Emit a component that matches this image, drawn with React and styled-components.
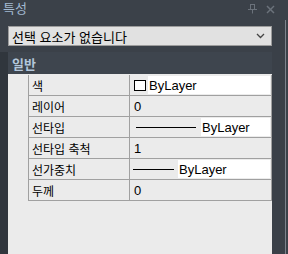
import React from "react";
import styled, { createGlobalStyle } from "styled-components";

const GlobalStyle = createGlobalStyle`
  html, body {
    margin: 0;
    padding: 0;
    background: #3b4149;
    overflow: hidden;
  }
  body {
    font-family: "Liberation Sans", "Noto Sans CJK KR", sans-serif;
  }
`;

const Panel = styled.div`
  width: 288px;
  height: 254px;
  display: flex;
  flex-direction: column;
  background: #3b4149;
`;

const TitleBar = styled.div`
  height: 20px;
  display: flex;
  align-items: center;
  justify-content: space-between;
  padding: 0 13px 0 3px;
`;

const Title = styled.span`
  color: #a3bad2;
  font-size: 13px;
  line-height: 20px;
  margin-top: -2px;
`;

const TitleIcons = styled.div`
  display: flex;
  align-items: center;
  gap: 9px;
  color: #6b727b;
  margin-top: -2px;
`;

const Body = styled.div`
  flex: 1;
  display: flex;
  min-height: 0;
`;

const Main = styled.div`
  width: 272px;
  display: flex;
  flex-direction: column;
`;

const RightEdge = styled.div`
  width: 13px;
  border-right: 1px solid #7c838c;
  background: #3a4048;
`;

const RightPad = styled.div`
  width: 2px;
  background: #3b4149;
`;

const DropdownArea = styled.div`
  height: 32px;
  padding: 6px 0 0 8px;
  box-sizing: border-box;
`;

const Dropdown = styled.div`
  width: 264px;
  height: 20px;
  box-sizing: border-box;
  border: 1px solid #9c9c9c;
  background: #e1e1e1;
  display: flex;
  align-items: center;
  justify-content: space-between;
  padding: 0 6px 0 3px;
  font-size: 13px;
  color: #000;
`;

const Lower = styled.div`
  flex: 1;
  display: flex;
  min-height: 0;
`;

const LeftStrip = styled.div`
  width: 8px;
  background: #30363d;
`;

const Content = styled.div`
  width: 264px;
  display: flex;
  flex-direction: column;
  background: #ebebeb;
`;

const SectionHeader = styled.div`
  height: 22px;
  background: #3e454e;
  color: #b3c6da;
  font-size: 13px;
  font-weight: bold;
  display: flex;
  align-items: center;
  padding-left: 4px;
`;

const Table = styled.div`
  display: flex;
  flex-direction: column;
  padding: 1px 0 0 20px;
`;

const Row = styled.div`
  display: grid;
  grid-template-columns: 101px 140px;
  height: 21px;
  box-sizing: border-box;
  border-left: 1px solid #a0a0a0;
  border-right: 1px solid #a0a0a0;
  border-bottom: 1px solid #a0a0a0;
  font-size: 12px;
  color: #000;
`;

const Label = styled.div`
  display: flex;
  align-items: center;
  padding-left: 3px;
  border-right: 1px solid #a0a0a0;
`;

const Value = styled.div`
  display: flex;
  align-items: center;
  padding: 1px 0 1px ${(p) => p.$pad ?? 4}px;
  box-sizing: border-box;
  font-size: 13px;
`;

const Swatch = styled.span`
  width: 12px;
  height: 11px;
  box-sizing: border-box;
  border: 1px solid #000;
  background: #fff;
  margin-right: 2px;
`;

const LineSample = styled.span`
  width: ${(p) => p.$w}px;
  height: 1px;
  background: #000;
  margin-right: ${(p) => p.$gap}px;
`;

const WhiteField = styled.span`
  flex: 1;
  align-self: stretch;
  background: #fff;
  display: flex;
  align-items: center;
  padding-left: 1px;
`;

const PinIcon = () => (
  <svg width="9" height="10" viewBox="0 0 9 10" fill="none" stroke="currentColor" strokeWidth="1">
    <rect x="2.5" y="0.5" width="4" height="5" />
    <line x1="0" y1="5.5" x2="9" y2="5.5" />
    <line x1="4.5" y1="5.5" x2="4.5" y2="9.5" />
  </svg>
);

const CloseIcon = () => (
  <svg width="9" height="9" viewBox="0 0 9 9" stroke="currentColor" strokeWidth="1.5">
    <line x1="1" y1="1" x2="8" y2="8" />
    <line x1="8" y1="1" x2="1" y2="8" />
  </svg>
);

const Chevron = () => (
  <svg width="9" height="6" viewBox="0 0 9 6" fill="none" stroke="#444" strokeWidth="1.3">
    <polyline points="1,1 4.5,4.5 8,1" />
  </svg>
);

export default function App() {
  return (
    <>
      <GlobalStyle />
      <Panel>
        <TitleBar>
          <Title>특성</Title>
          <TitleIcons>
            <PinIcon />
            <CloseIcon />
          </TitleIcons>
        </TitleBar>
        <Body>
          <Main>
            <DropdownArea>
              <Dropdown>
                <span>선택 요소가 없습니다</span>
                <Chevron />
              </Dropdown>
            </DropdownArea>
            <Lower>
              <LeftStrip />
              <Content>
                <SectionHeader>일반</SectionHeader>
                <Table>
                  <Row>
                    <Label>색</Label>
                    <Value>
                      <Swatch />
                      <WhiteField>ByLayer</WhiteField>
                    </Value>
                  </Row>
                  <Row>
                    <Label>레이어</Label>
                    <Value>0</Value>
                  </Row>
                  <Row>
                    <Label>선타입</Label>
                    <Value $pad={6}>
                      <LineSample $w={60} $gap={5} />
                      <WhiteField>ByLayer</WhiteField>
                    </Value>
                  </Row>
                  <Row>
                    <Label>선타입 축척</Label>
                    <Value>1</Value>
                  </Row>
                  <Row>
                    <Label>선가중치</Label>
                    <Value $pad={3}>
                      <LineSample $w={41} $gap={4} />
                      <WhiteField>ByLayer</WhiteField>
                    </Value>
                  </Row>
                  <Row>
                    <Label>두께</Label>
                    <Value>0</Value>
                  </Row>
                </Table>
              </Content>
            </Lower>
          </Main>
          <RightEdge />
          <RightPad />
        </Body>
      </Panel>
    </>
  );
}
